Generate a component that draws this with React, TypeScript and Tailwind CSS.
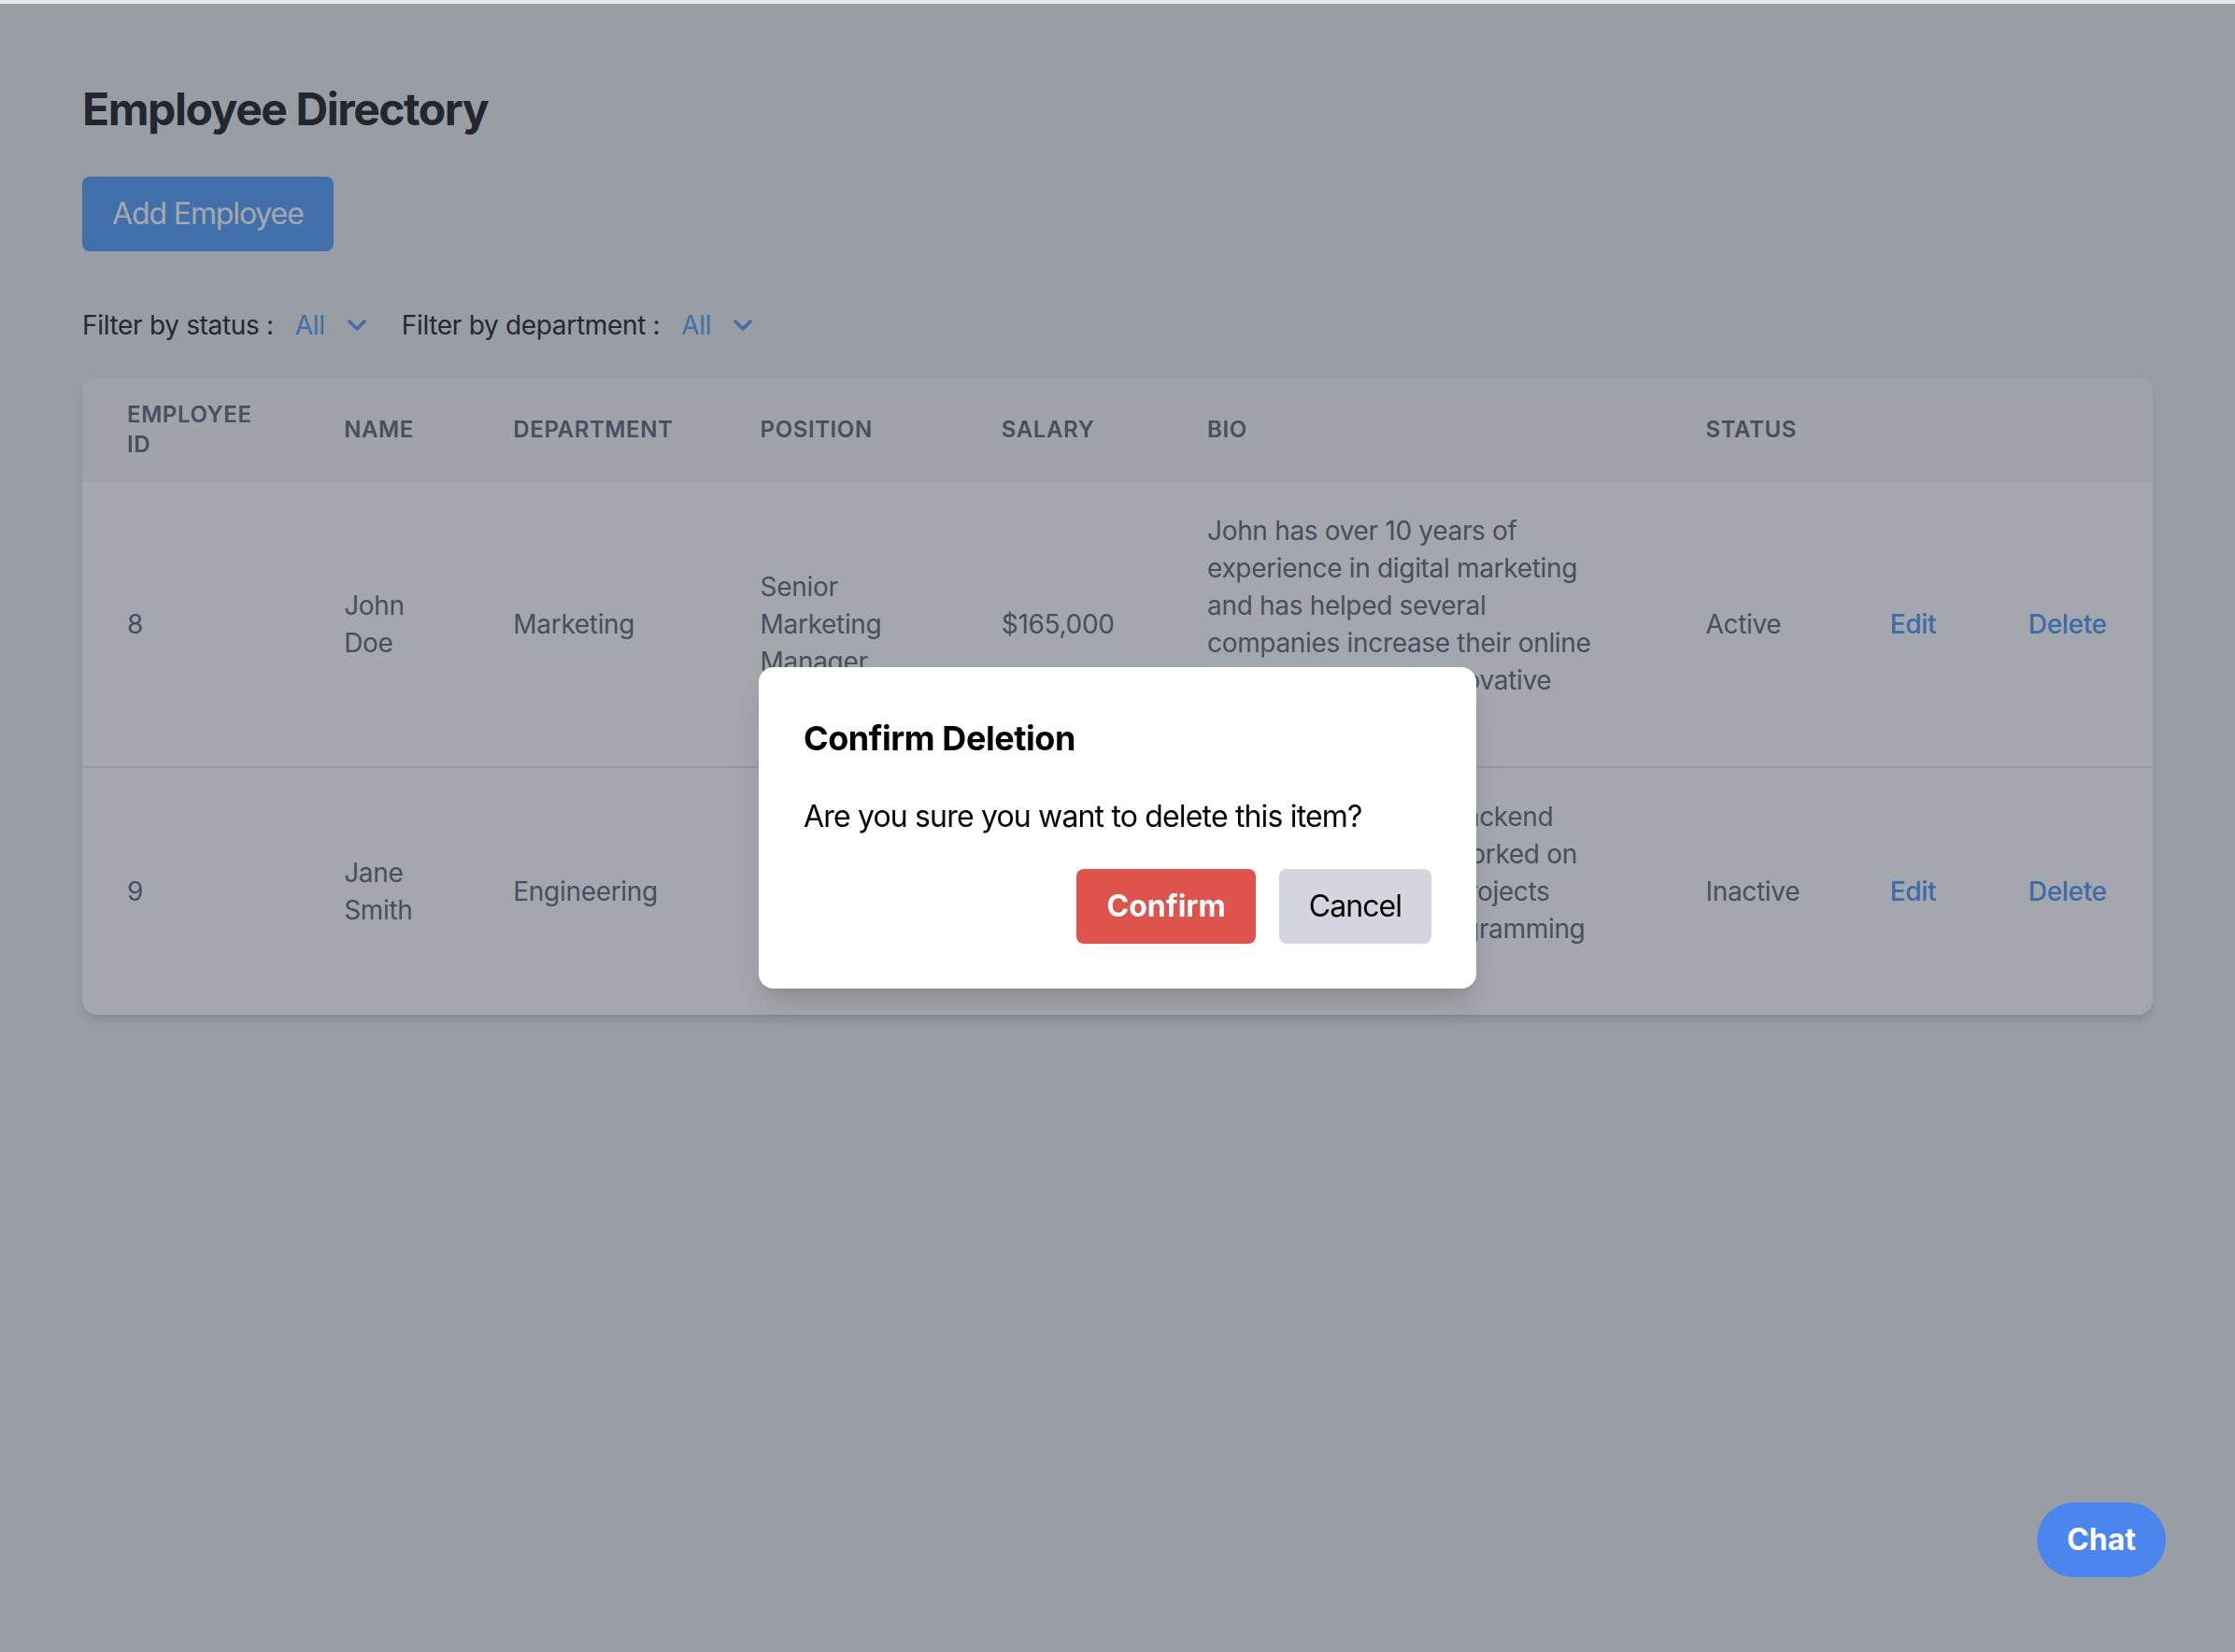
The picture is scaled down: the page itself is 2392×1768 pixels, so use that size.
import React from "react";

type Employee = {
  id: number;
  name: string;
  department: string;
  position: string;
  salary: string;
  bio: string;
  status: string;
};

const employees: Employee[] = [
  {
    id: 8,
    name: "John Doe",
    department: "Marketing",
    position: "Senior Marketing Manager",
    salary: "$165,000",
    bio: "John has over 10 years of experience in digital marketing and has helped several companies increase their online presence through innovative marketing strategies.",
    status: "Active",
  },
  {
    id: 9,
    name: "Jane Smith",
    department: "Engineering",
    position: "Lead Software Engineer",
    salary: "$150,000",
    bio: "Jane is a dedicated backend developer, who has worked on multiple large-scale projects using a variety of programming languages.",
    status: "Inactive",
  },
];

const columns = ["Employee ID", "Name", "Department", "Position", "Salary", "Bio", "Status", "", ""];
const widths = ["w-[232px]", "w-[181px]", "w-[264px]", "w-[258px]", "w-[220px]", "w-[533px]", "w-[197px]", "w-[148px]", "w-[181px]"];

function Chevron() {
  return (
    <svg width="20" height="12" viewBox="0 0 20 12" fill="none" className="ml-[24px]">
      <path d="M2 2l8 8 8-8" stroke="currentColor" strokeWidth="3.5" strokeLinecap="round" strokeLinejoin="round" />
    </svg>
  );
}

function Filter({ label }: { label: string }) {
  return (
    <div className="flex items-center">
      <span className="text-[#333333]">{label}</span>
      <div className="ml-[23px] flex items-center text-[#60a5fa]">
        <span>All</span>
        <Chevron />
      </div>
    </div>
  );
}

export default function App() {
  return (
    <div className="min-h-screen bg-[#eef0f3] font-['Inter','Noto_Sans',sans-serif] tracking-[-0.02em]">
      <div className="h-[4px] bg-[#e5e6ea]" />

      {/* page */}
      <div className="px-[88px] pt-[81px]">
        <h1 className="text-[48px] leading-[64px] font-bold text-[#2e2f33] tracking-[-0.03em] mb-[40px]">
          Employee Directory
        </h1>
        <button className="px-[32px] py-[16px] rounded-lg bg-[#60a5fa] text-white text-[32px] leading-[48px] tracking-[-0.035em]">
          Add Employee
        </button>

        <div className="mt-[59px] mb-[36px] flex items-center gap-[38px] text-[28px] leading-[40px]">
          <Filter label="Filter by status :" />
          <Filter label="Filter by department :" />
        </div>

        <div className="bg-white rounded-2xl overflow-hidden shadow-[0_8px_12px_-2px_rgba(0,0,0,0.1),0_4px_8px_-4px_rgba(0,0,0,0.1)]">
          <table className="w-full table-fixed text-left">
            <thead className="bg-[#f9fafb]">
              <tr>
                {columns.map((c, i) => (
                  <th
                    key={i}
                    className={`${widths[i]} px-[48px] py-[24px] text-[24px] leading-[32px] font-semibold uppercase tracking-[0.025em] text-[#6b7280]`}
                  >
                    {c}
                  </th>
                ))}
              </tr>
            </thead>
            <tbody className="divide-y-2 divide-[#e5e7eb] text-[28px] leading-[40px] text-[#6b7280]">
              {employees.map((e) => (
                <tr key={e.id}>
                  <td className="px-[48px] py-[32px]">{e.id}</td>
                  <td className="px-[48px] py-[32px]">{e.name}</td>
                  <td className="px-[48px] py-[32px]">{e.department}</td>
                  <td className="px-[48px] py-[32px]">{e.position}</td>
                  <td className="px-[48px] py-[32px] whitespace-nowrap">{e.salary}</td>
                  <td className="px-[48px] py-[32px]">{e.bio}</td>
                  <td className="px-[48px] py-[32px]">{e.status}</td>
                  <td className="px-[48px] py-[32px] font-medium text-[#5a9ef5]">Edit</td>
                  <td className="px-[48px] py-[32px] font-medium text-[#5a9ef5]">Delete</td>
                </tr>
              ))}
            </tbody>
          </table>
        </div>
      </div>

      {/* modal */}
      <div className="fixed inset-0 top-[4px] bg-[rgba(17,24,39,0.38)] flex items-center justify-center">
        <div className="w-[768px] bg-white rounded-2xl p-[48px] shadow-[0_20px_30px_-6px_rgba(0,0,0,0.15),0_8px_12px_-8px_rgba(0,0,0,0.1)]">
          <h2 className="text-[36px] leading-[56px] font-bold text-black tracking-[-0.012em] mb-[32px]">Confirm Deletion</h2>
          <p className="text-[32px] leading-[48px] text-black tracking-[-0.026em]">Are you sure you want to delete this item?</p>
          <div className="mt-[32px] flex justify-end gap-[25px]">
            <button className="px-[32px] py-[16px] rounded-lg bg-[#df534d] text-white font-bold text-[32px] leading-[48px] tracking-normal">
              Confirm
            </button>
            <button className="px-[32px] py-[16px] rounded-lg bg-[#d3d6de] text-black text-[32px] leading-[48px] tracking-[-0.03em]">
              Cancel
            </button>
          </div>
        </div>
      </div>

      <button className="fixed right-[74px] bottom-[80px] rounded-full px-[32px] py-[16px] bg-[#4a86ee] text-white font-bold text-[32px] leading-[48px] tracking-normal">
        Chat
      </button>
    </div>
  );
}
